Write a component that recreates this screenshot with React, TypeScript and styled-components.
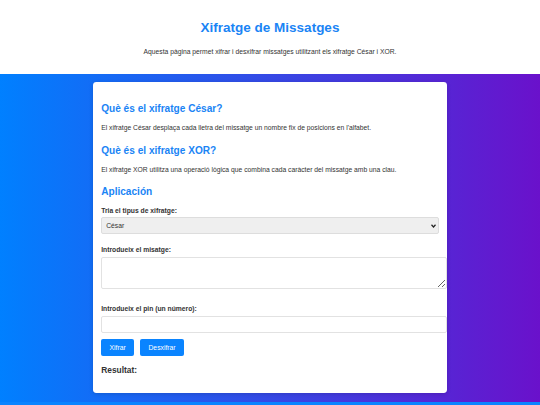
import React, { useState } from 'react'
import styled, { createGlobalStyle } from 'styled-components'

const GlobalStyle = createGlobalStyle`
	html, body {
		margin: 0;
		padding: 0;
		background: #ffffff;
	}
	body {
		font-family: "Liberation Sans", Arial, sans-serif;
		color: #333333;
	}
`

const Header = styled.header`
	background: #ffffff;
	padding: 20px 0 18px;
	text-align: center;
`

const Title = styled.h1`
	margin: 0;
	font-size: 13.5px;
	line-height: 16px;
	font-weight: 700;
	color: #1a84f5;
`

const Intro = styled.p`
	margin: 12px 0 0;
	font-size: 6.75px;
	line-height: 8px;
	color: #333333;
`

const Main = styled.main`
	background: linear-gradient(to right, #0080ff, #6a11cb);
	padding: 8.4px 0 9px;
`

const Card = styled.section`
	box-sizing: border-box;
	width: 354.4px;
	margin: 0 auto;
	background: #ffffff;
	border-radius: 3.4px;
	box-shadow: 0 1px 4px rgba(0, 0, 0, 0.15);
	padding: 8px 8.4px 18px;
	display: flex;
	flex-direction: column;
	align-items: stretch;
`

const Heading = styled.h2<{ $top: number }>`
	margin: ${(p) => p.$top}px 0 0;
	font-size: 10.1px;
	line-height: 12px;
	font-weight: 700;
	color: #1a84f5;
`

const Text = styled.p<{ $top: number }>`
	margin: ${(p) => p.$top}px 0 0;
	font-size: 6.75px;
	line-height: 8px;
	color: #333333;
`

const Label = styled.label<{ $top: number }>`
	display: block;
	margin: ${(p) => p.$top}px 0 0;
	font-size: 6.75px;
	line-height: 8px;
	font-weight: 700;
	color: #333333;
`

const SelectWrap = styled.div`
	position: relative;
	margin: 2px 0 0;
`

const Select = styled.select`
	box-sizing: border-box;
	display: block;
	width: 100%;
	height: 17px;
	margin: 0;
	padding: 0 4px;
	font-family: inherit;
	font-size: 6.75px;
	color: #333333;
	background: #efefef;
	border: 1px solid #dddddd;
	border-radius: 2px;
	appearance: none;
	-webkit-appearance: none;
`

const Chevron = styled.svg`
	position: absolute;
	right: 3px;
	top: 6.5px;
	width: 5px;
	height: 4px;
	pointer-events: none;
`

const TextArea = styled.textarea`
	display: block;
	box-sizing: content-box;
	width: calc(100% - 2px);
	height: 30px;
	margin: 3px 0 0;
	padding: 0 4px;
	font-family: inherit;
	font-size: 6.75px;
	border: 1px solid #e2e2e2;
	border-radius: 2px;
	background: #ffffff;
`

const Input = styled.input`
	display: block;
	box-sizing: content-box;
	width: calc(100% - 2px);
	height: 15px;
	margin: 3px 0 0;
	padding: 0 4px;
	font-family: inherit;
	font-size: 6.75px;
	border: 1px solid #e2e2e2;
	border-radius: 2px;
	background: #ffffff;
	-moz-appearance: textfield;
	&::-webkit-inner-spin-button,
	&::-webkit-outer-spin-button {
		-webkit-appearance: none;
		margin: 0;
	}
`

const Actions = styled.div`
	display: flex;
	gap: 6px;
	margin-top: 6px;
`

const Button = styled.button`
	height: 17px;
	padding: 0 8.4px;
	font-family: inherit;
	font-size: 6.75px;
	color: #ffffff;
	background: #0a84ff;
	border: none;
	border-radius: 2px;
	cursor: pointer;
`

const Result = styled.h3`
	margin: 9px 0 0;
	font-size: 8.4px;
	line-height: 10px;
	font-weight: 700;
	color: #333333;
`

const Footer = styled.footer`
	background: #0a84ff;
	height: 20px;
`

const App: React.FC = () => {
	const [kind, setKind] = useState('cesar')
	const [message, setMessage] = useState('')
	const [pin, setPin] = useState('')

	return (
		<>
			<GlobalStyle />
			<Header>
				<Title>Xifratge de Missatges</Title>
				<Intro>Aquesta pàgina permet xifrar i desxifrar missatges utilitzant els xifratge César i XOR.</Intro>
			</Header>
			<Main>
				<Card>
					<Heading $top={13}>Què és el xifratge César?</Heading>
					<Text $top={9}>El xifratge César desplaça cada lletra del missatge un nombre fix de posicions en l'alfabet.</Text>
					<Heading $top={13}>Què és el xifratge XOR?</Heading>
					<Text $top={9}>El xifratge XOR utilitza una operació lògica que combina cada caràcter del missatge amb una clau.</Text>
					<Heading $top={12}>Aplicación</Heading>
					<Label $top={9} htmlFor="kind">Tria el tipus de xifratge:</Label>
					<SelectWrap>
						<Select id="kind" value={kind} onChange={(e) => setKind(e.target.value)}>
							<option value="cesar">César</option>
							<option value="xor">XOR</option>
						</Select>
						<Chevron viewBox="0 0 10 8">
							<path d="M1 1.5 L5 6 L9 1.5" fill="none" stroke="#222222" strokeWidth="2.4" />
						</Chevron>
					</SelectWrap>
					<Label $top={12} htmlFor="message">Introdueix el misatge:</Label>
					<TextArea id="message" value={message} onChange={(e) => setMessage(e.target.value)} />
					<Label $top={16} htmlFor="pin">Introdueix el pin (un número):</Label>
					<Input id="pin" type="number" value={pin} onChange={(e) => setPin(e.target.value)} />
					<Actions>
						<Button>Xifrar</Button>
						<Button>Desxifrar</Button>
					</Actions>
					<Result>Resultat:</Result>
				</Card>
			</Main>
			<Footer />
		</>
	)
}

export default App
